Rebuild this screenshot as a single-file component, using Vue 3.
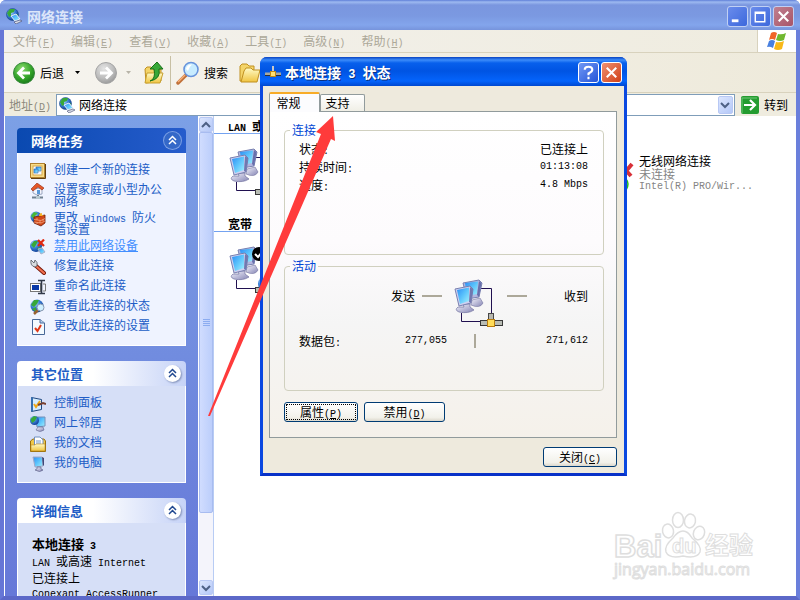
<template>
    <div class="explorer">
        <svg class="sprite" aria-hidden="true">
            <defs>
                <radialGradient id="gBall" cx="0.35" cy="0.3" r="0.8">
                    <stop offset="0" stop-color="#b8e0ff" />
                    <stop offset="0.45" stop-color="#3a80d8" />
                    <stop offset="1" stop-color="#0b3488" />
                </radialGradient>
                <linearGradient id="gScreen" x1="0" y1="0" x2="1" y2="1">
                    <stop offset="0" stop-color="#2c8cf4" />
                    <stop offset="0.5" stop-color="#5cc4fc" />
                    <stop offset="1" stop-color="#a4f0fc" />
                </linearGradient>
                <linearGradient id="gCase" x1="0" y1="0" x2="1" y2="1">
                    <stop offset="0" stop-color="#f4f4fc" />
                    <stop offset="1" stop-color="#8484b4" />
                </linearGradient>
                <radialGradient id="gGreen" cx="0.4" cy="0.3" r="0.75">
                    <stop offset="0" stop-color="#8cdc70" />
                    <stop offset="0.6" stop-color="#35a52a" />
                    <stop offset="1" stop-color="#167818" />
                </radialGradient>
                <radialGradient id="gGray" cx="0.4" cy="0.3" r="0.75">
                    <stop offset="0" stop-color="#e4e4e4" />
                    <stop offset="0.6" stop-color="#bdbdbd" />
                    <stop offset="1" stop-color="#969696" />
                </radialGradient>
                <linearGradient id="gFolder" x1="0" y1="0" x2="0" y2="1">
                    <stop offset="0" stop-color="#fffbc8" />
                    <stop offset="1" stop-color="#f0c440" />
                </linearGradient>
            </defs>

            <symbol id="ic-netconn" viewBox="0 0 16 16">
                <circle cx="6.5" cy="6.5" r="6" fill="url(#gBall)" stroke="#184888" stroke-width="0.6" />
                <path d="M1 5L4 1L9 1L8 4L5 5L5 8L3 9ZM8 8L12 6L11 10L9 12Z" fill="#38a838" />
                <path d="M5 8L10 6L14 11L9 13Z" fill="url(#gScreen)" stroke="#e4ecf8" />
                <path d="M8 14L14 12L16 13L10 16Z" fill="#d8dce8" stroke="#444c70" stroke-width="0.6" />
            </symbol>
            <symbol id="ic-new" viewBox="0 0 16 16">
                <rect x="0.5" y="0.5" width="14" height="14" fill="#f8dc88" stroke="#b08030" />
                <rect x="3" y="3" width="9" height="9" fill="#f4f8ff" stroke="#d8a848" />
                <path d="M6 4H11V8H6Z" fill="url(#gScreen)" stroke="#3868a8" stroke-width="0.6" />
                <path d="M4 6H8V10H4Z" fill="url(#gScreen)" stroke="#3868a8" stroke-width="0.6" />
                <path d="M15.500 1V15.500H1" stroke="#604010" fill="none" />
            </symbol>
            <symbol id="ic-home" viewBox="0 0 16 16">
                <path d="M3 6L12 5V11L7 12L3 10Z" fill="#f4f4fc" stroke="#7888a8" stroke-width="0.7" />
                <path d="M1 6L7 0L14 5L12 7L8 4L3 8Z" fill="#e45828" stroke="#902810" stroke-width="0.6" />
                <path d="M7 7H10V11H7Z" fill="#5898d8" />
                <path d="M8 12V15M2 14.500H13" stroke="#708090" stroke-width="2" />
                <rect x="6" y="13" width="4" height="3" fill="#b8c8d0" />
            </symbol>
            <symbol id="ic-fire" viewBox="0 0 16 16">
                <circle cx="6" cy="6" r="5.500" fill="url(#gBall)" />
                <path d="M1 5L4 1L8 2L5 5L4 8Z" fill="#48b838" />
                <path d="M4 6L15 4V12L11 15L4 12Z" fill="#d04818" stroke="#701c08" stroke-width="0.8" />
                <path d="M4 8.500L11 9.500L15 7.500M4 11L11 12L15 10M7 7V9M10 9.500V12M7 11.500V13M13 8V10" stroke="#f8b090" stroke-width="0.7" fill="none" />
                <path d="M9 5Q9 2 12 2Q11 4 14 5Z" fill="#f8b020" />
            </symbol>
            <symbol id="ic-disable" viewBox="0 0 16 16">
                <circle cx="6" cy="7" r="6" fill="url(#gBall)" />
                <path d="M1 6L4 2L8 2L6 6L4 9ZM7 9L11 8L9 12Z" fill="#38a838" />
                <path d="M8 10L12 9L15 13L11 15Z" fill="url(#gScreen)" stroke="#a8b0c8" />
                <path d="M8 1L14 7M14 0.500L8 7" stroke="#e02810" stroke-width="2.200" />
            </symbol>
            <symbol id="ic-repair" viewBox="0 0 16 16">
                <path d="M5 6L14 14" stroke="#781808" stroke-width="4" stroke-linecap="round" />
                <path d="M6 7L14 14" stroke="#f07050" stroke-width="2.200" stroke-linecap="round" />
                <path d="M1 1L4 4L5 1Q8 3 7 7L5 8Q0 7 1 1Z" fill="#d8dce0" stroke="#505860" stroke-width="0.8" />
            </symbol>
            <symbol id="ic-rename" viewBox="0 0 16 16">
                <rect x="0.500" y="4.500" width="10" height="8" fill="#fff" stroke="#787878" />
                <rect x="2" y="6" width="7" height="5" fill="#0838a8" />
                <path d="M8 1.500H15M11.500 2V14M8 14.500H15" stroke="#303848" stroke-width="1.600" />
                <path d="M13 5H15.500V12H13" stroke="#787878" fill="none" />
            </symbol>
            <symbol id="ic-status" viewBox="0 0 16 16">
                <circle cx="7" cy="7" r="6.500" fill="url(#gBall)" />
                <path d="M1 6L4 1L9 1L7 5L4 8ZM2 10L6 8L6 13Z" fill="#38a838" />
                <path d="M8 11L4 15" stroke="#986030" stroke-width="2.500" />
                <circle cx="10.500" cy="8.500" r="3.500" fill="#d0f0ff" stroke="#8898b0" />
            </symbol>
            <symbol id="ic-settings" viewBox="0 0 16 16">
                <path d="M2.500 0.500H10L14.500 4V15.500H2.500Z" fill="#f4faff" stroke="#486898" />
                <path d="M10 0.500V4H14.500" fill="#b8d0f0" stroke="#486898" />
                <path d="M5 9L7.500 12L11 6" stroke="#e03818" stroke-width="2" fill="none" />
            </symbol>
            <symbol id="ic-panel" viewBox="0 0 16 16">
                <path d="M1.500 1.500L11.500 3.500V13.500L1.500 15.500Z" fill="#d4ecff" stroke="#204880" />
                <path d="M1 1.500L3 1V15.500L1 15Z" fill="#3870b0" />
                <path d="M4 8L6 11L10 5" stroke="#f0a818" stroke-width="2" fill="none" />
                <path d="M8 9L13 7L16 8" stroke="#784030" stroke-width="2" fill="none" />
            </symbol>
            <symbol id="ic-places" viewBox="0 0 16 16">
                <path d="M6 1H15V10L7 11Z" fill="url(#gScreen)" stroke="#7890b8" />
                <circle cx="4.500" cy="4.500" r="4.500" fill="url(#gBall)" />
                <path d="M0.500 3L4 0L7 1L5 5L2 7Z" fill="#38a838" />
                <path d="M8 11H13L14 14Q10 17 6 14Z" fill="url(#gCase)" stroke="#606890" stroke-width="0.600" />
            </symbol>
            <symbol id="ic-docs" viewBox="0 0 16 16">
                <path d="M0.500 5L3 3H14L15.500 5V15.500H0.500Z" fill="#f0c848" stroke="#987010" />
                <path d="M4.500 1H10L13 4V12H4.500Z" fill="#fff" stroke="#7090c0" />
                <path d="M6 5H11M6 7H11" stroke="#7098d0" />
                <path d="M1 9H5L6 8H15V15H1Z" fill="url(#gFolder)" stroke="#b88818" stroke-width="0.600" />
            </symbol>
            <symbol id="ic-pc" viewBox="0 0 16 16">
                <path d="M3 1L12 1L13 10L5 11Z" fill="url(#gScreen)" stroke="#a0a8c8" />
                <path d="M12 1L14 2V9L13 10Z" fill="#404878" />
                <path d="M7 11H11V13L13 14Q10 17 5 14L7 13Z" fill="url(#gCase)" stroke="#505880" stroke-width="0.600" />
            </symbol>

            <symbol id="ic-lan" viewBox="0 0 52 52">
                <path d="M26 9.500H38.500V34M8.500 34V42.500H27" fill="none" stroke="#201050" />
                <path d="M19 21L27 19L30 24Q27 30 18 26Z" fill="url(#gCase)" stroke="#7474a0" stroke-width="0.600" />
                <path d="M10 4L26 1L29 4L26 18L14 20Z" fill="#b4b8e0" stroke="#7880b0" />
                <path d="M12 4L25 2.500L24 15L14 17Z" fill="url(#gScreen)" />
                <path d="M26 2L28.500 4L26 18L24 16Z" fill="#6870ac" />
                <path d="M10 25H17V28L21 31Q15 35 6 33Q1 31 5 28L11 28Z" fill="url(#gCase)" stroke="#7474a0" stroke-width="0.700" />
                <path d="M2 10L17 7L20 10L18 24L6 27Z" fill="#d0d0f0" stroke="#7880b0" />
                <path d="M4 11L16 8.500L16 22L7 25Z" fill="url(#gScreen)" />
                <path d="M17 8L20 10L18 24L16 23Z" fill="#7078b0" />
                <rect x="35.500" y="34.500" width="5" height="7" fill="#b8b8b0" stroke="#484848" />
                <rect x="27.500" y="41.500" width="22" height="5" fill="#b8bcb4" stroke="#383838" />
                <rect x="34.500" y="40.500" width="7" height="7" fill="#ffdc58" stroke="#b87c10" />
            </symbol>
            <symbol id="ic-folder" viewBox="0 0 24 24">
                <path d="M2 5L4 3H9L11 5H16V8L14 20H2Z" fill="#f4d468" stroke="#c09020" />
                <path d="M6 10L8 7H13L15 9H22L19 21H3Z" fill="url(#gFolder)" stroke="#c09020" />
            </symbol>
        </svg>

        <header class="titlebar">
            <svg class="ico16"><use href="#ic-netconn" /></svg>
            <h1>网络连接</h1>
            <div class="win-buttons">
                <button class="wb" aria-label="最小化"><svg viewBox="0 0 20 20"><path d="M4 14.500H11" stroke="#fff" stroke-width="3" /></svg></button>
                <button class="wb" aria-label="最大化"><svg viewBox="0 0 20 20"><path d="M4.500 5.500H14.500V15.500H4.500ZM4 6.500H15" fill="none" stroke="#fff" stroke-width="1.500" /></svg></button>
                <button class="wb wb-close" aria-label="关闭"><svg viewBox="0 0 20 20"><path d="M5 5L15 15M15 5L5 15" stroke="#fff" stroke-width="2.200" /></svg></button>
            </div>
        </header>

        <div class="frame">
            <nav class="menubar">
                <button v-for="m in menus" :key="m.key" class="menu">{{ m.label }}<span class="lat">(<u>{{ m.key }}</u>)</span></button>
                <div class="flag">
                    <svg viewBox="0 0 22 20" width="22" height="20">
                        <path d="M5 2Q8 0 11 2L9 9Q6 7 3 9Z" fill="#f06428" />
                        <path d="M12 3Q16 4 20 2L18 9Q14 11 10 9Z" fill="#70b830" />
                        <path d="M3 10Q6 8 9 10L7 17Q4 15 1 16Z" fill="#4880e0" />
                        <path d="M10 11Q14 12 18 10L16 18Q12 20 8 18Z" fill="#f8b818" />
                    </svg>
                </div>
            </nav>

            <div class="toolbar">
                <button class="tool">
                    <svg width="24" height="24" viewBox="0 0 24 24">
                        <circle cx="12" cy="12" r="10.500" fill="url(#gGreen)" stroke="#38883c" />
                        <path d="M18 12H7M12 6.500L6.500 12L12 17.500" fill="none" stroke="#fff" stroke-width="2.800" />
                    </svg>
                    <span>后退</span>
                </button>
                <button class="drop" aria-label="后退历史"></button>
                <button class="tool" disabled aria-label="前进">
                    <svg width="24" height="24" viewBox="0 0 24 24">
                        <circle cx="12" cy="12" r="10.500" fill="url(#gGray)" stroke="#a4a4a4" />
                        <path d="M6 12H17M12 6.500L17.500 12L12 17.500" fill="none" stroke="#fff" stroke-width="2.800" />
                    </svg>
                </button>
                <button class="drop drop-off" disabled aria-label="前进历史"></button>
                <button class="tool" aria-label="向上">
                    <svg width="22" height="24" viewBox="0 0 22 24">
                        <path d="M2 8L4 6H8L10 8H18V20L3 22Z" fill="#f4d468" stroke="#c09020" />
                        <path d="M4 12H20L17 22H2Z" fill="url(#gFolder)" stroke="#c8a030" />
                        <path d="M7 20Q13 18 11 8H7L14 1L20 8H16Q18 18 7 20Z" fill="#38a838" stroke="#187018" />
                    </svg>
                </button>
                <span class="sep"></span>
                <button class="tool">
                    <svg width="24" height="24" viewBox="0 0 24 24">
                        <path d="M10 14L2 22" stroke="#c07038" stroke-width="3.500" stroke-linecap="round" />
                        <path d="M9 14L2 21" stroke="#f8b078" stroke-width="1.500" />
                        <circle cx="15" cy="8.500" r="7" fill="#c8ecff" stroke="#6894dc" stroke-width="1.600" />
                        <path d="M10 8Q11 3 16 3.500Q13 6 12 10Z" fill="#fff" />
                    </svg>
                    <span>搜索</span>
                </button>
                <button class="tool folders" aria-label="文件夹"><svg width="24" height="24"><use href="#ic-folder" /></svg></button>
            </div>

            <div class="addressbar">
                <label for="addr">地址<span class="lat">(<u>D</u>)</span></label>
                <div class="combo">
                    <svg class="ico16"><use href="#ic-netconn" /></svg>
                    <input id="addr" v-model="address" type="text">
                    <button class="chev" aria-label="展开"><svg viewBox="0 0 10 8"><path d="M1 2L5 6L9 2" /></svg></button>
                </div>
                <button class="go">
                    <svg width="18" height="18" viewBox="0 0 18 18">
                        <rect width="18" height="18" rx="2" fill="#249c30" />
                        <path d="M1 17V2H16" fill="none" stroke="#70c878" />
                        <path d="M3 9H13M9 4L14 9L9 14" fill="none" stroke="#fff" stroke-width="2.200" />
                    </svg>
                    <span>转到</span>
                </button>
            </div>

            <div class="content">
                <aside class="sidebar">
                    <section v-for="(p, pIdx) in panels" :key="p.title" class="panel" :class="{ primary: pIdx === 0 }">
                        <div class="panel-head">
                            <h2>{{ p.title }}</h2>
                            <button class="collapse" :aria-label="p.title">
                                <svg viewBox="0 0 17 17" width="17" height="17"><path d="M5 8L8.500 4.500L12 8M5 12L8.500 8.500L12 12" /></svg>
                            </button>
                        </div>
                        <ul class="panel-body">
                            <li v-for="item in p.items" :key="item.icon">
                                <svg class="ico16"><use :href="'#' + item.icon" /></svg>
                                <a href="#" :class="{ hot: item.hot }">
                                    <template v-for="(t, i) in item.text" :key="i"><span v-if="isLatin(t)" class="lat">{{ t }}</span><template v-else>{{ t }}</template></template>
                                </a>
                            </li>
                        </ul>
                    </section>
                    <section class="panel">
                        <div class="panel-head">
                            <h2>详细信息</h2>
                            <button class="collapse" aria-label="详细信息">
                                <svg viewBox="0 0 17 17" width="17" height="17"><path d="M5 8L8.500 4.500L12 8M5 12L8.500 8.500L12 12" /></svg>
                            </button>
                        </div>
                        <div class="details">
                            <p class="strong">本地连接<span class="lat"> 3</span></p>
                            <p><span class="lat">LAN </span>或高速<span class="lat"> Internet</span></p>
                            <p>已连接上</p>
                            <p class="lat">Conexant AccessRunner</p>
                        </div>
                    </section>
                </aside>

                <div class="scrollbar">
                    <button class="sb" aria-label="向上滚动"><svg viewBox="0 0 10 8"><path d="M1 6L5 2L9 6" /></svg></button>
                    <div class="thumb"><i></i><i></i><i></i><i></i></div>
                    <div class="track"></div>
                    <button class="sb" aria-label="向下滚动"><svg viewBox="0 0 10 8"><path d="M1 2L5 6L9 2" /></svg></button>
                </div>

                <main class="list">
                    <h3><span class="lat">LAN </span>或高速<span class="lat"> Internet</span></h3>
                    <div class="conns">
                        <svg class="conn-ico"><use href="#ic-lan" /></svg>
                        <div class="conn">
                            <svg class="conn-ico" viewBox="0 0 52 52">
                                <path d="M34 17L44 28M45 16L34 29" stroke="#d83038" stroke-width="4" />
                                <path d="M36 33Q39 36 36 40M39 31Q43 36 39 42" stroke="#28c018" stroke-width="1.500" fill="none" />
                            </svg>
                            <div class="conn-text">
                                <p>无线网络连接</p>
                                <p class="dim">未连接</p>
                                <p class="dim lat">Intel(R) PRO/Wir...</p>
                            </div>
                        </div>
                    </div>
                    <h3>宽带</h3>
                    <div class="conns">
                        <svg class="conn-ico" viewBox="0 0 52 52">
                            <use href="#ic-lan" width="52" height="52" />
                            <circle cx="31" cy="8" r="7" fill="#000" />
                            <path d="M27 8L30 11L35 5" stroke="#fff" stroke-width="2" fill="none" />
                            <circle cx="38" cy="38" r="8" fill="url(#gBall)" />
                        </svg>
                    </div>
                    <svg class="watermark" width="156" height="84" viewBox="0 0 156 84">
                        <g fill="#fff" stroke="#dedede" stroke-width="1.500">
                            <ellipse cx="74" cy="22" rx="5.500" ry="7.500" />
                            <ellipse cx="86" cy="23" rx="5.500" ry="7" transform="rotate(12 86 23)" />
                            <ellipse cx="64" cy="33" rx="5.500" ry="7" transform="rotate(-12 64 33)" />
                            <ellipse cx="95" cy="35" rx="5.500" ry="7" transform="rotate(20 95 35)" />
                            <path d="M79 33Q84 33 88 40Q98 48 96 54Q93 61 79 58Q65 61 62 54Q60 48 69 40Q74 33 79 33Z" />
                            <text x="10" y="59" class="wm-latin">Bai</text>
                            <text x="68" y="55" class="wm-du">du</text>
                            <text x="101" y="56" class="wm-cjk">经验</text>
                            <text x="10" y="77" class="wm-url">jingyan.baidu.com</text>
                        </g>
                    </svg>
                </main>
            </div>
        </div>

        <div class="dialog" role="dialog" aria-label="本地连接 3 状态">
            <header class="dlg-title">
                <svg width="16" height="16" viewBox="0 0 16 16">
                    <path d="M8 2V8" stroke="#c8c8c8" stroke-width="2" />
                    <path d="M0 10H16" stroke="#a8a8a0" stroke-width="3" />
                    <path d="M0 11.500H16" stroke="#303030" />
                    <rect x="5.500" y="7.500" width="5" height="5" fill="#ffe070" stroke="#c08818" />
                </svg>
                <h1>本地连接<span class="lat"> 3 </span>状态</h1>
                <button class="db" aria-label="帮助"><svg viewBox="0 0 20 20"><path d="M6 7Q6 4 10 4Q14 4 14 7Q14 9 10 11V13M10 14.500V17" fill="none" stroke="#fff" stroke-width="2.200" /></svg></button>
                <button class="db db-close" aria-label="关闭"><svg viewBox="0 0 20 20"><path d="M5 5L15 15M15 5L5 15" stroke="#fff" stroke-width="2.200" /></svg></button>
            </header>
            <div class="dlg-body">
                <div class="tabs" role="tablist">
                    <button
                        v-for="(t, i) in tabs"
                        :key="t"
                        class="tab"
                        :class="{ active: i === tab }"
                        role="tab"
                        :aria-selected="i === tab"
                        @click="tab = i"
                    >
                        {{ t }}
                    </button>
                </div>
                <div class="sheet">
                    <fieldset class="group">
                        <legend>连接</legend>
                        <dl class="facts">
                            <div><dt>状态<span class="lat">:</span></dt><dd>已连接上</dd></div>
                            <div><dt>持续时间<span class="lat">:</span></dt><dd class="lat">01:13:08</dd></div>
                            <div><dt>速度<span class="lat">:</span></dt><dd class="lat">4.8 Mbps</dd></div>
                        </dl>
                    </fieldset>
                    <fieldset class="group">
                        <legend>活动</legend>
                        <div class="activity">
                            <div class="sent">发送<i></i></div>
                            <svg class="lan-big"><use href="#ic-lan" /></svg>
                            <div class="recv"><i></i>收到</div>
                        </div>
                        <div class="packets">
                            <div class="count"><span>数据包<span class="lat">:</span></span><b class="lat">277,055</b></div>
                            <i></i>
                            <b class="lat">271,612</b>
                        </div>
                    </fieldset>
                    <div class="actions">
                        <button class="btn focused">属性<span class="lat">(<u>P</u>)</span></button>
                        <button class="btn wide">禁用<span class="lat">(<u>D</u>)</span></button>
                    </div>
                </div>
                <div class="footer">
                    <button class="btn">关闭<span class="lat">(<u>C</u>)</span></button>
                </div>
            </div>
        </div>

        <svg class="arrow" width="130" height="304" viewBox="0 0 130 304" aria-hidden="true">
            <path d="M126 1L128 26L124 24L3 301L1 301L114 19L109 17Z" fill="#ff3b3b" />
        </svg>
    </div>
</template>

<script setup>
import { ref } from 'vue';

const address = ref('网络连接');
const tab = ref(0);
const tabs = ['常规', '支持'];

const menus = [
    { label: '文件', key: 'F' },
    { label: '编辑', key: 'E' },
    { label: '查看', key: 'V' },
    { label: '收藏', key: 'A' },
    { label: '工具', key: 'T' },
    { label: '高级', key: 'N' },
    { label: '帮助', key: 'H' },
];

const panels = [
    {
        title: '网络任务',
        items: [
            { icon: 'ic-new', text: ['创建一个新的连接'] },
            { icon: 'ic-home', text: ['设置家庭或小型办公网络'] },
            { icon: 'ic-fire', text: ['更改', ' Windows ', '防火墙设置'] },
            { icon: 'ic-disable', text: ['禁用此网络设备'], hot: true },
            { icon: 'ic-repair', text: ['修复此连接'] },
            { icon: 'ic-rename', text: ['重命名此连接'] },
            { icon: 'ic-status', text: ['查看此连接的状态'] },
            { icon: 'ic-settings', text: ['更改此连接的设置'] },
        ],
    },
    {
        title: '其它位置',
        items: [
            { icon: 'ic-panel', text: ['控制面板'] },
            { icon: 'ic-places', text: ['网上邻居'] },
            { icon: 'ic-docs', text: ['我的文档'] },
            { icon: 'ic-pc', text: ['我的电脑'] },
        ],
    },
];

// Latin runs use a half-width face next to the CJK text
const isLatin = (t) => /[A-Za-z]/.test(t);
</script>

<style>
html, body, #app { height: 100%; }
body { margin: 0; overflow: hidden; background: #fff; }
</style>

<style scoped>
.explorer {
    position: relative;
    display: flex;
    flex-direction: column;
    height: 100vh;
    box-sizing: border-box;
    overflow: hidden;
    border-radius: 6px 6px 0 0;
    background: #6b7fdc;
    color: #000;
    font: 12px/12px "Noto Sans CJK SC", sans-serif;
}
.explorer * { box-sizing: border-box; }
h1, h2, h3, p, ul, dl, dd { margin: 0; padding: 0; }
ul { list-style: none; }
button {
    margin: 0;
    padding: 0;
    border: none;
    background: none;
    color: inherit;
    font: inherit;
}
.sprite { position: absolute; width: 0; height: 0; }
.lat { font-family: "Liberation Mono", monospace; font-size: 10px; white-space: pre-wrap; }
span.lat { line-height: 0; }
b.lat { font-weight: normal; }
.ico16 { width: 16px; height: 16px; flex: none; }

/* ----------------- WINDOW ------------------ */
.titlebar {
    display: flex;
    align-items: center;
    flex: none;
    height: 30px;
    padding: 2px 6px 0;
    background: linear-gradient(#5f7fd8 0, #9db9f0 2px, #7a96df 5px, #7b99e1 16px, #83a5ec 25px, #7794dc 30px);
}
.titlebar h1 {
    flex: 1;
    margin-left: 5px;
    color: #dce6fa;
    font-size: 14px;
    font-weight: bold;
    line-height: 16px;
}
.win-buttons { display: flex; gap: 2px; }
.wb {
    width: 21px;
    height: 21px;
    border: 1px solid #c0d0f4;
    border-radius: 3px;
    background: linear-gradient(135deg, #6a8cec, #3c68dc);
}
.wb-close { background: linear-gradient(135deg, #c08090, #a85468); }
.wb svg, .db svg { display: block; width: 100%; height: 100%; }
.frame {
    display: flex;
    flex: 1;
    flex-direction: column;
    min-height: 0;
    border: 4px solid #6a7fdb;
    border-top: none;
    border-left-color: #6676d6;
    border-bottom-color: #5c68c8;
}
.menubar {
    display: flex;
    align-items: stretch;
    gap: 16px;
    flex: none;
    height: 23px;
    padding-left: 9px;
    border-bottom: 1px solid #d8d2bd;
    background: linear-gradient(90deg, #f3f1ed, #efecdf);
}
.menu { color: #aca899; }
.flag {
    display: flex;
    align-items: center;
    justify-content: center;
    width: 39px;
    margin-left: auto;
    border-left: 1px solid #d8d2bd;
    background: #fff;
}
.toolbar {
    display: flex;
    align-items: center;
    flex: none;
    height: 40px;
    padding-left: 8px;
    border-bottom: 1px solid #d8d2bd;
    background: linear-gradient(90deg, #f6f4ef, #eeeadb);
}
.tool { display: flex; align-items: center; gap: 4px; }
.drop {
    width: 5px;
    height: 3px;
    margin: 0 14px 0 11px;
    background: #000;
    clip-path: polygon(0 0, 100% 0, 50% 100%);
}
.drop-off { margin: 0 12px 0 8px; background: #b8b4a8; }
.sep { width: 1px; height: 34px; margin: 0 5px; background: #c8c0a4; }
.folders { margin-left: 10px; }
.addressbar {
    display: flex;
    align-items: center;
    flex: none;
    height: 23px;
    padding: 0 8px 0 5px;
    background: #efecdf;
}
.addressbar label { color: #8c897c; }
.combo {
    display: flex;
    align-items: center;
    flex: 1;
    height: 22px;
    margin: 0 6px 0 5px;
    padding: 0 1px 0 2px;
    border: 1px solid #7f9db9;
    background: #fff;
}
.combo input {
    flex: 1;
    min-width: 0;
    margin-left: 4px;
    padding: 0;
    border: none;
    outline: none;
    background: none;
    font: inherit;
    line-height: 18px;
}
.chev, .sb {
    display: flex;
    align-items: center;
    justify-content: center;
    width: 15px;
    height: 18px;
    border: 1px solid #b8c8f4;
    border-radius: 2px;
    background: linear-gradient(135deg, #dce6fe, #b4c8f8);
}
.chev svg, .sb svg { width: 10px; height: 8px; fill: none; stroke: #4d6185; stroke-width: 2; }
.go { display: flex; align-items: center; gap: 5px; }

/* ----------------- SIDEBAR ------------------ */
.content { display: flex; flex: 1; min-height: 0; background: #fff; }
.sidebar {
    display: flex;
    flex: none;
    flex-direction: column;
    gap: 15px;
    width: 193px;
    margin-left: 1px;
    padding: 12px 12px 0;
    overflow: hidden;
    background: linear-gradient(#7ca0e6, #6678d8);
}
.panel { flex: none; }
.panel-head {
    display: flex;
    align-items: center;
    justify-content: space-between;
    height: 25px;
    padding: 0 5px 0 14px;
    border-radius: 4px 4px 0 0;
    background: linear-gradient(90deg, #fff 45%, #c6d3f7);
}
.panel-head h2 {
    color: #215dc6;
    font-size: 13px;
    font-weight: bold;
    line-height: 16px;
}
.collapse {
    width: 17px;
    height: 17px;
    border-radius: 50%;
    background: #fff;
    box-shadow: 1px 1px 2px #8090b8;
}
.collapse svg { display: block; fill: none; stroke: #204890; stroke-width: 1.5px; }
.primary .panel-head { background: linear-gradient(90deg, #0a49b0, #265ccc); }
.primary h2 { color: #fff; }
.primary .collapse { background: #3468c8; box-shadow: 0 0 0 1px #7ca0e4; }
.primary .collapse svg { stroke: #fff; }
.panel-body, .details {
    border: 1px solid #fff;
    border-top: none;
    background: #d6dff7;
}
.primary .panel-body { background: #eff3ff; }
.panel-body {
    display: flex;
    flex-direction: column;
    gap: 2px;
    padding: 8px 12px 10px;
}
.panel-body li { display: flex; gap: 8px; align-items: flex-start; height: auto; padding-top: 2px; }
.panel-body .ico16 { margin-bottom: -2px; }
.panel-body li { min-height: 18px; }
.panel-body a { width: 110px; color: #215dc6; text-decoration: none; }
.panel-body a.hot { color: #428eff; text-decoration: underline; }
.details { padding: 12px 0 0 14px; line-height: 17px; white-space: nowrap; }
.strong { font-size: 13px; font-weight: bold; }
.details p { height: 17px; }
.scrollbar {
    display: flex;
    flex: none;
    flex-direction: column;
    width: 16px;
    padding: 1px 0;
    border-left: 1px solid #fff;
    border-right: 1px solid #b8ccf4;
    background: #f4f4fb;
}
.sb { flex: none; width: 14px; height: 15px; }
.thumb {
    display: flex;
    flex: 381;
    flex-direction: column;
    align-items: center;
    justify-content: center;
    gap: 1px;
    border: 1px solid #a8bcf0;
    border-radius: 2px;
    background: linear-gradient(90deg, #d0dcfe, #bccefb);
}
.thumb i { width: 7px; height: 1px; background: #8cacf0; }
.track { flex: 67; }

/* ----------------- CONNECTIONS ------------------ */
.list { position: relative; flex: 1; min-width: 0; overflow: hidden; }
.list h3 {
    height: 18px;
    padding: 4px 0 0 14px;
    border-bottom: 1px solid;
    border-image: linear-gradient(90deg, #70a0f0, #fff 70%) 1;
    font-size: 12px;
    font-weight: bold;
    line-height: 12px;
    white-space: nowrap;
}
.conns {
    display: grid;
    grid-template-columns: 359px 1fr;
    height: 80px;
    padding: 14px 0 0 14px;
}
.conn-ico { width: 52px; height: 52px; flex: none; }
.conn { display: flex; }
.conn-text { padding-top: 6px; line-height: 13px; white-space: nowrap; }
.conn-text p { height: 13px; }
.dim { color: #848484; }
.watermark { position: absolute; right: 36px; bottom: 14px; }
.wm-latin { font: bold 31px "Liberation Sans", sans-serif; }
.wm-du { font: bold 20px "Liberation Sans", sans-serif; stroke-width: 1px; }
.wm-cjk { font: bold 24px "Noto Sans CJK SC", sans-serif; stroke-width: 1px; }
.wm-url { font: 16px "Open Sans", sans-serif; stroke-width: 1px; }

/* ----------------- DIALOG ------------------ */
.dialog {
    position: absolute;
    top: 57px;
    left: 260px;
    width: 367px;
    border: 3px solid #0a48e0;
    border-top: none;
    border-bottom-color: #0831c8;
    border-radius: 7px 7px 0 0;
    background: #0054e3;
}
.dlg-title {
    display: flex;
    align-items: center;
    gap: 2px;
    height: 29px;
    margin: 0 -3px;
    padding: 1px 5px 0 5px;
    border-radius: 7px 7px 0 0;
    background: linear-gradient(#0842c0 0, #3c8cfa 3px, #0860ec 6px, #0054e3 14px, #0464fc 24px, #0048d0 29px);
}
.dlg-title h1 {
    flex: 1;
    margin-left: 2px;
    color: #fff;
    font-size: 14px;
    font-weight: bold;
    line-height: 16px;
    text-shadow: 1px 1px #0a3080;
}
.dlg-title .lat { font-size: 12px; }
.db {
    width: 21px;
    height: 21px;
    border: 1px solid #fff;
    border-radius: 3px;
    background: linear-gradient(135deg, #7098f4, #2454d8);
}
.db-close { background: linear-gradient(135deg, #f09070, #d04018); }
.dlg-body { padding: 6px 7px 6px 6px; background: #eeeadd; }
.tabs { display: flex; align-items: flex-end; height: 19px; }
.tab {
    width: 45px;
    height: 17px;
    border: 1px solid #919b9c;
    border-bottom: none;
    border-radius: 2px 2px 0 0;
    background: linear-gradient(#fff, #f0efe6);
    padding-right: 10px;
}
.tab.active {
    z-index: 1;
    width: 51px;
    height: 20px;
    margin-bottom: -1px;
    padding-right: 12px;
    border-top: 2px solid #f8ac28;
    background: #fcfcfe;
}
.sheet {
    padding: 12px 12px 15px 14px;
    border: 1px solid #919b9c;
    background: linear-gradient(#fff, #fdfbfd 40%, #f5f5f5 65%, #f5f1ea);
}
.group {
    min-width: 0;
    height: 131px;
    margin: 0 0 5px;
    padding: 4px 15px 0 14px;
    border: 1px solid #d0d0bf;
    border-radius: 4px;
}
.group legend { margin-left: -9px; padding: 0 2px; color: #0046d5; }
.facts div { display: flex; justify-content: space-between; height: 18px; line-height: 18px; }
.activity, .packets { display: grid; grid-template-columns: 148px 56px 1fr; }
.activity { padding-top: 3px; height: 58px; }
.activity i { width: 20px; height: 2px; background: #aca899; }
.sent, .recv { display: flex; align-items: center; height: 34px; }
.sent { justify-content: flex-end; gap: 7px; padding-right: 5px; }
.recv { justify-content: space-between; padding-left: 4px; }
.lan-big { width: 52px; height: 52px; margin-left: 6px; }
.packets { align-items: center; height: 14px; text-align: right; }
.count { display: flex; justify-content: space-between; }
.packets i { justify-self: center; width: 2px; height: 14px; background: #aca899; }
.actions { display: flex; gap: 6px; margin-top: 11px; }
.btn {
    width: 74px;
    height: 20px;
    border: 1px solid #003c74;
    border-radius: 3px;
    background: linear-gradient(#fff, #f2f1ea 80%, #dcd8cc);
}
.btn.wide { width: 81px; }
.btn.focused { outline: 1px dotted #000; outline-offset: -3px; }
.footer { display: flex; justify-content: flex-end; padding-top: 9px; }

.arrow { position: absolute; top: 115px; left: 207px; pointer-events: none; }
</style>
